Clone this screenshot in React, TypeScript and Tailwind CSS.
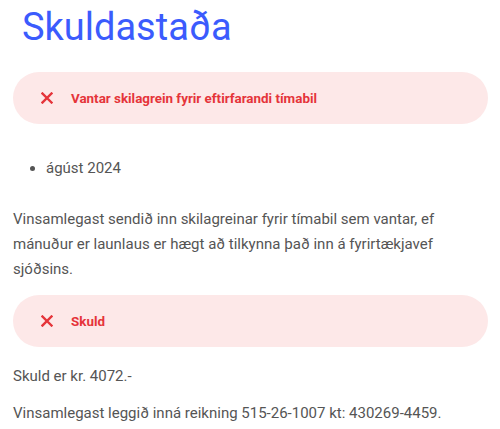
import React from 'react';

const XIcon = () => (
  <svg width="12" height="12" viewBox="0 0 12 12" className="shrink-0">
    <path d="M1.5 1.5 L10.5 10.5 M10.5 1.5 L1.5 10.5" stroke="#e5343a" strokeWidth="2.4" strokeLinecap="square" />
  </svg>
);

const Alert = ({ text }: { text: string }) => (
  <div className="flex h-[52px] items-center gap-[18px] rounded-full bg-[#fde8e8] pl-[28px] pr-6">
    <XIcon />
    <span className="text-[13.4px] font-bold text-[#e5343a]">{text}</span>
  </div>
);

const App = () => {
  return (
    <div className="min-h-[429px] bg-white pl-[13px] pr-[12px] text-[15px] leading-[25px] text-[#555555] font-['Roboto',sans-serif]">
      <h1 className="pl-[9px] pt-[2px] text-[38px] leading-[50px] font-normal text-[#3b5bfd]">Skuldastaða</h1>

      <div className="mt-[20px]">
        <Alert text="Vantar skilagrein fyrir eftirfarandi tímabil" />
      </div>

      <ul className="mt-[32px] list-disc pl-[33px] marker:text-[#555555]">
        <li>ágúst 2024</li>
      </ul>

      <p className="mt-[26px]">
        Vinsamlegast sendið inn skilagreinar fyrir tímabil sem vantar, ef mánuður er launlaus er hægt að tilkynna það inn á fyrirtækjavef sjóðsins.
      </p>

      <div className="mt-[13px]">
        <Alert text="Skuld" />
      </div>

      <p className="mt-[17px]">Skuld er kr. 4072.-</p>
      <p className="mt-[12px]">Vinsamlegast leggið inná reikning 515-26-1007 kt: 430269-4459.</p>
    </div>
  );
};

export default App;
